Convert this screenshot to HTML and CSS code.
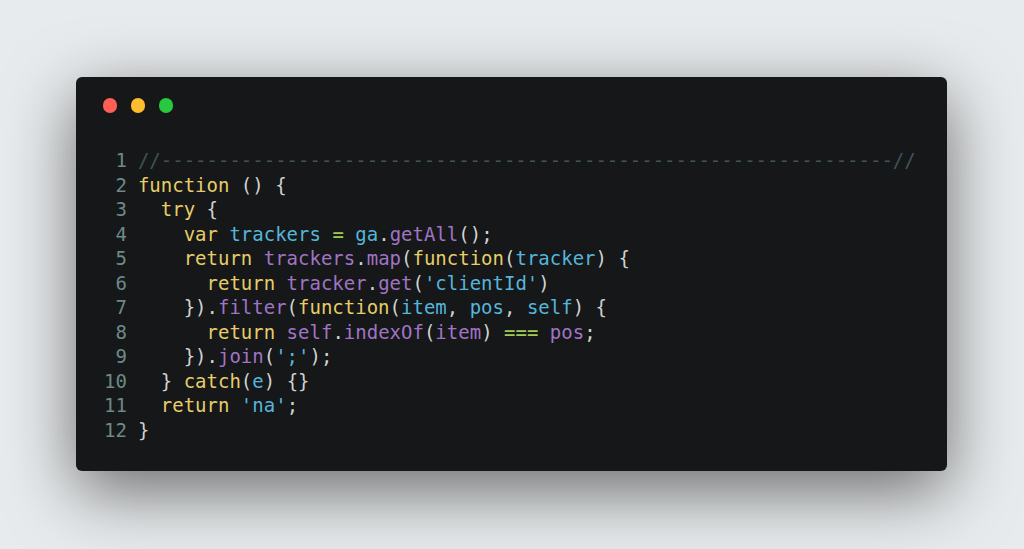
FILE: index.html
```html
<!DOCTYPE html>
<html>
<head>
<meta charset="utf-8">
<link rel="stylesheet" href="styles.css">
</head>
<body>
<div class="window">
  <div class="titlebar">
    <span class="dot red"></span>
    <span class="dot yellow"></span>
    <span class="dot green"></span>
  </div>
  <div class="code">
<div class="line"><span class="ln">1</span><span class="src"><span class="c">//----------------------------------------------------------------//</span></span></div>
<div class="line"><span class="ln">2</span><span class="src"><span class="k">function</span> () {</span></div>
<div class="line"><span class="ln">3</span><span class="src">  <span class="k">try</span> {</span></div>
<div class="line"><span class="ln">4</span><span class="src">    <span class="k">var</span> <span class="v">trackers</span> <span class="o">=</span> <span class="v">ga</span>.<span class="p">getAll</span>();</span></div>
<div class="line"><span class="ln">5</span><span class="src">    <span class="k">return</span> <span class="p">trackers</span>.<span class="p">map</span>(<span class="k">function</span>(<span class="v">tracker</span>) {</span></div>
<div class="line"><span class="ln">6</span><span class="src">      <span class="k">return</span> <span class="p">tracker</span>.<span class="p">get</span>(<span class="v">'clientId'</span>)</span></div>
<div class="line"><span class="ln">7</span><span class="src">    }).<span class="p">filter</span>(<span class="k">function</span>(<span class="v">item</span>, <span class="v">pos</span>, <span class="v">self</span>) {</span></div>
<div class="line"><span class="ln">8</span><span class="src">      <span class="k">return</span> <span class="p">self</span>.<span class="p">indexOf</span>(<span class="p">item</span>) <span class="o">===</span> <span class="p">pos</span>;</span></div>
<div class="line"><span class="ln">9</span><span class="src">    }).<span class="p">join</span>(<span class="v">';'</span>);</span></div>
<div class="line"><span class="ln">10</span><span class="src">  } <span class="k">catch</span>(<span class="v">e</span>) {}</span></div>
<div class="line"><span class="ln">11</span><span class="src">  <span class="k">return</span> <span class="v">'na'</span>;</span></div>
<div class="line"><span class="ln">12</span><span class="src">}</span></div>
  </div>
</div>
</body>
</html>
```

FILE: styles.css
```css
html, body {
  margin: 0;
  padding: 0;
  background: #e8ebed;
  height: 100%;
  overflow: hidden;
}

body {
  padding: 77px 0 0 76px;
  box-sizing: border-box;
}

.window {
  width: 871px;
  height: 394px;
  box-sizing: border-box;
  background: #151718;
  border-radius: 6px;
  box-shadow: 0 20px 68px rgba(0, 0, 0, 0.55);
  padding: 21px 0 0 26px;
}

.titlebar {
  display: flex;
  gap: 13.5px;
  height: 14px;
  margin-left: 0.5px;
}

.dot {
  width: 14.5px;
  height: 14.5px;
  border-radius: 50%;
  display: block;
}
.red { background: #ff5f56; }
.yellow { background: #ffbd2e; }
.green { background: #27c93f; }

.code {
  margin-top: 36px;
  margin-left: 2px;
  font-family: "DejaVu Sans Mono", "Liberation Mono", monospace;
  font-size: 19px;
  line-height: 24.5px;
  color: #cfd2d1;
}

.line {
  display: flex;
  white-space: pre;
}

.ln {
  width: 2ch;
  text-align: right;
  color: #6d8a88;
  margin-right: 11px;
  flex: none;
}

.c { color: #41535b; }
.k { color: #e6cd69; }
.v { color: #55b5db; }
.p { color: #a074c4; }
.o { color: #9fca56; }
```
